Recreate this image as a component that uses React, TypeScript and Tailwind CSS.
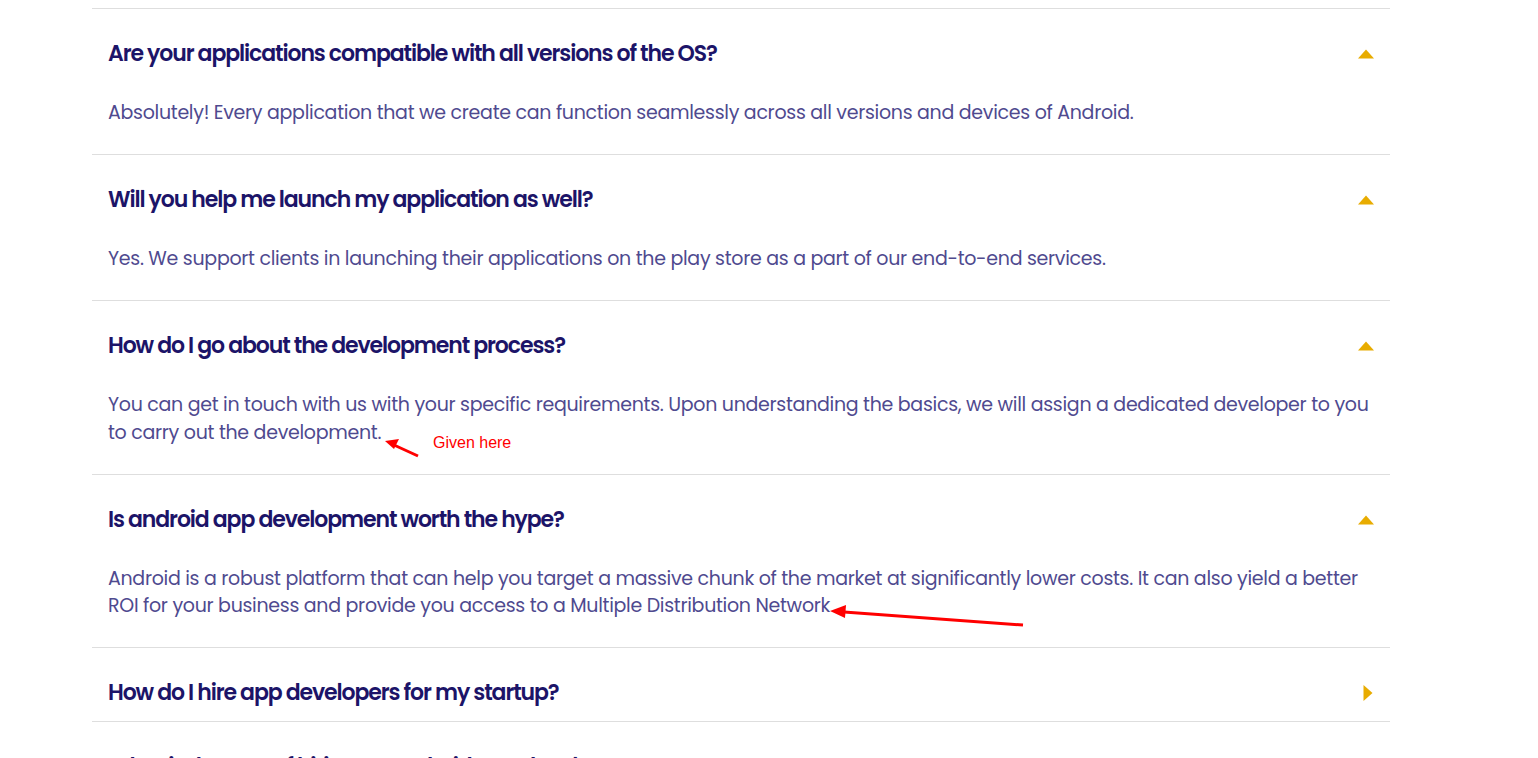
const FAQS = [
  {
    q: "Are your applications compatible with all versions of the OS?",
    a: "Absolutely! Every application that we create can function seamlessly across all versions and devices of Android.",
    open: true,
  },
  {
    q: "Will you help me launch my application as well?",
    a: "Yes. We support clients in launching their applications on the play store as a part of our end-to-end services.",
    open: true,
  },
  {
    q: "How do I go about the development process?",
    a: "You can get in touch with us with your specific requirements. Upon understanding the basics, we will assign a dedicated developer to you to carry out the development.",
    open: true,
  },
  {
    q: "Is android app development worth the hype?",
    a: "Android is a robust platform that can help you target a massive chunk of the market at significantly lower costs. It can also yield a better ROI for your business and provide you access to a Multiple Distribution Network",
    open: true,
  },
  {
    q: "How do I hire app developers for my startup?",
    a: "",
    open: false,
  },
  {
    q: "What is the cost of hiring an android app developer?",
    a: "",
    open: false,
  },
]

function Caret({ open }: { open: boolean }) {
  return open ? (
    <svg width="16" height="10" viewBox="0 0 16 10" className="shrink-0">
      <path d="M8 0.5L16 9.5H0z" fill="#e8ac00" />
    </svg>
  ) : (
    <svg width="10" height="16" viewBox="0 0 10 16" className="shrink-0 mr-[1px]">
      <path d="M0.5 0L9.5 8L0.5 16z" fill="#e8ac00" />
    </svg>
  )
}

export default function App() {
  return (
    <div className="relative w-[1538px] h-[758px] overflow-hidden bg-white">
      <div className="ml-[92px] w-[1298px] pt-[8px]">
        <div className="border-t border-[#dedede]">
          {FAQS.map((f) => (
            <div key={f.q} className="border-b border-[#dedede]">
              <div className="flex items-center justify-between px-4 pt-[30px] pb-[13px]">
                <h3 className="text-[22px] leading-[30px] font-semibold text-[#1c1468] tracking-[-1.1px] font-['Poppins','Inter',sans-serif]">
                  {f.q}
                </h3>
                <Caret open={f.open} />
              </div>
              {f.open && (
                <p className="px-4 pt-[17px] pb-[27.5px] text-[19px] leading-[27.5px] text-[#4f4a8f] tracking-[-0.3px] font-['Poppins','Inter',sans-serif]">
                  {f.a}
                </p>
              )}
            </div>
          ))}
        </div>
      </div>

      {/* annotations */}
      <svg className="absolute inset-0 pointer-events-none" width="1538" height="758">
        <line x1="418" y1="456" x2="394" y2="445" stroke="#f00" strokeWidth="3" />
        <path d="M385 441L399 439L394 449z" fill="#f00" />
        <line x1="1023" y1="625" x2="844" y2="612" stroke="#f00" strokeWidth="3" />
        <path d="M830 611L846 605L845 618z" fill="#f00" />
      </svg>
      <span className="absolute left-[433px] top-[433px] text-[16px] leading-[20px] text-[#f00] font-['Liberation_Sans',Arial,sans-serif]">
        Given here
      </span>
    </div>
  )
}
